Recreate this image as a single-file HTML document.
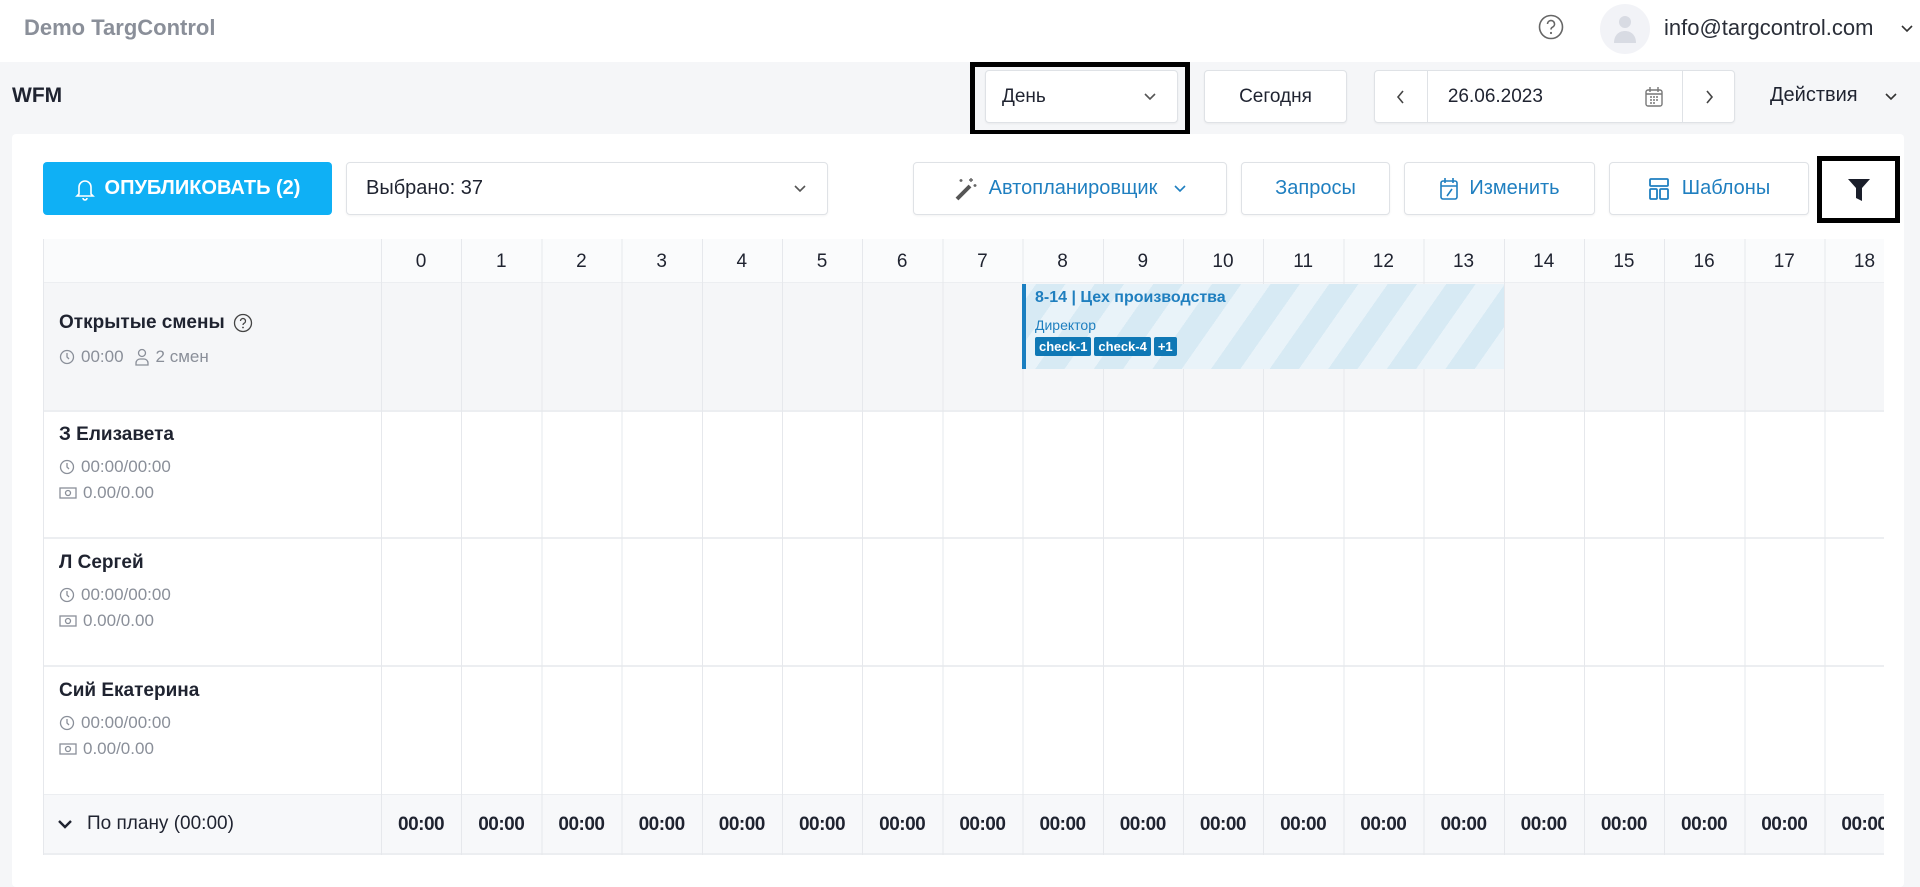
<!DOCTYPE html>
<html><head><meta charset="utf-8">
<style>
*{box-sizing:border-box;margin:0;padding:0}
body{width:1920px;height:887px;overflow:hidden;background:#f5f6f8;font-family:"Liberation Sans","Noto Sans CJK SC",sans-serif;color:#1f2330;position:relative}
.a{position:absolute}
.top{left:0;top:0;width:1920px;height:62px;background:#fff}
.btn{position:absolute;background:#fff;border:1px solid #dfe2e6;border-radius:4px;display:flex;align-items:center;justify-content:center;font-size:19px;box-shadow:0 1px 2px rgba(0,0,0,.05)}
.blue{color:#1f7fc0}
.card{left:12px;top:134px;width:1892px;height:753px;background:#fff;border-radius:4px}
.tbl{left:43px;top:239px;width:1841px;height:616px;overflow:hidden;background:#fff}
.row{position:absolute;left:0;width:1841px;border-bottom:2px solid #eceef1}
.vl{position:absolute;left:338px;top:0;width:1600px;height:616px;background:repeating-linear-gradient(to right,#e6e8ec 0 1px,transparent 1px 80.2px)}
.hrs{position:absolute;left:338px;display:flex}
.hrs span{width:80.2px;flex:none;text-align:center}
.name{position:absolute;left:16px;font-size:19px;font-weight:bold}
.meta{position:absolute;left:16px;font-size:17px;color:#8a8f99;display:flex;align-items:center;gap:6px}
.tag{display:inline-block;background:#0f78b5;color:#fff;font-size:13px;font-weight:bold;padding:2px 4px;border-radius:2px;margin-right:3px}
</style></head><body>
<div class="a top"></div>
<div class="a" style="left:24px;top:15px;font-size:22px;font-weight:bold;color:#8a8f99">Demo TargControl</div>
<svg class="a" style="left:1538px;top:14px" width="26" height="26" viewBox="0 0 26 26"><circle cx="13" cy="13" r="11.5" fill="none" stroke="#666" stroke-width="1.6"/><path d="M9.5 10a3.5 3.5 0 1 1 5 3.2c-1 .5-1.5 1.1-1.5 2.3" fill="none" stroke="#666" stroke-width="1.6"/><circle cx="13" cy="19" r="1.1" fill="#666"/></svg>
<div class="a" style="left:1600px;top:4px;width:50px;height:50px;border-radius:50%;background:#f2f3f7"></div>
<svg class="a" style="left:1611px;top:13px" width="28" height="32" viewBox="0 0 28 32"><circle cx="14" cy="9" r="6" fill="#d8dbe3"/><path d="M3 30c0-8 5-12 11-12s11 4 11 12z" fill="#d8dbe3"/></svg>
<div class="a" style="left:1664px;top:15px;font-size:22px;color:#2a2e38">info@targcontrol.com</div>
<svg class="a" style="left:1900px;top:24px" width="14" height="10" viewBox="0 0 14 10"><path d="M2 2l5 5 5-5" fill="none" stroke="#333" stroke-width="1.6"/></svg>

<div class="a" style="left:12px;top:84px;font-size:21px;font-weight:bold">WFM</div>
<div class="a" style="left:970px;top:62px;width:220px;height:73px;border:5px solid #000"></div>
<div class="btn" style="left:985px;top:70px;width:193px;height:53px;justify-content:space-between;padding:0 20px 0 16px"><span>День</span><svg width="14" height="10" viewBox="0 0 14 10"><path d="M2 2l5 5 5-5" fill="none" stroke="#555" stroke-width="1.6"/></svg></div>
<div class="btn" style="left:1204px;top:70px;width:143px;height:53px">Сегодня</div>
<div class="btn" style="left:1374px;top:70px;width:361px;height:53px;justify-content:flex-start">
<div style="width:53px;height:51px;border-right:1px solid #dfe2e6;display:flex;align-items:center;justify-content:center"><svg width="10" height="16" viewBox="0 0 10 16"><path d="M7 2L2 8l5 6" fill="none" stroke="#444" stroke-width="1.6"/></svg></div>
<div style="width:255px;padding-left:20px;display:flex;justify-content:space-between;align-items:center;padding-right:18px"><span>26.06.2023</span><svg width="20" height="22" viewBox="0 0 20 22"><rect x="2" y="4" width="16" height="16" rx="2" fill="none" stroke="#777" stroke-width="1.4"/><path d="M6 1v5M14 1v5M2 8h16" stroke="#777" stroke-width="1.4"/><path d="M6 11h2M9 11h2M12 11h2M6 14h2M9 14h2M12 14h2M6 17h2M9 17h2" stroke="#777" stroke-width="1.4"/></svg></div>
<div style="width:52px;height:51px;border-left:1px solid #dfe2e6;display:flex;align-items:center;justify-content:center"><svg width="10" height="16" viewBox="0 0 10 16"><path d="M3 2l5 6-5 6" fill="none" stroke="#444" stroke-width="1.6"/></svg></div>
</div>
<div class="a" style="left:1770px;top:84px;font-size:20px">Действия</div>
<svg class="a" style="left:1884px;top:92px" width="14" height="10" viewBox="0 0 14 10"><path d="M2 2l5 5 5-5" fill="none" stroke="#333" stroke-width="1.6"/></svg>

<div class="a card"></div>
<div class="a" style="left:43px;top:162px;width:289px;height:53px;background:#0fb0f5;border-radius:4px;color:#fff;font-size:20px;font-weight:bold;display:flex;align-items:center;justify-content:center;gap:10px"><svg width="20" height="24" viewBox="0 0 20 24"><path d="M4 17V10a6 6 0 0 1 12 0v7l2 2H2z M8 21a2 2 0 0 0 4 0" fill="none" stroke="#fff" stroke-width="1.6"/></svg>ОПУБЛИКОВАТЬ (2)</div>
<div class="btn" style="left:346px;top:162px;width:482px;height:53px;justify-content:space-between;padding:0 20px 0 19px;font-size:20px"><span>Выбрано: 37</span><svg width="14" height="10" viewBox="0 0 14 10"><path d="M2 2l5 5 5-5" fill="none" stroke="#555" stroke-width="1.6"/></svg></div>
<div class="btn blue" style="left:913px;top:162px;width:314px;height:53px;gap:10px;font-size:20px"><svg width="26" height="26" viewBox="0 0 26 26"><path d="M4 23L17 10" stroke="#555" stroke-width="4"/><path d="M18 2v4M16 4h4M22 8v3M20.5 9.5h3M8 3v3M6.5 4.5h3" stroke="#666" stroke-width="1.4"/></svg>Автопланировщик<svg width="14" height="10" viewBox="0 0 14 10" style="margin-left:6px"><path d="M2 2l5 5 5-5" fill="none" stroke="#1f7fc0" stroke-width="1.6"/></svg></div>
<div class="btn blue" style="left:1241px;top:162px;width:149px;height:53px;font-size:20px">Запросы</div>
<div class="btn blue" style="left:1404px;top:162px;width:191px;height:53px;gap:10px;font-size:20px"><svg width="20" height="24" viewBox="0 0 20 24"><rect x="2" y="4" width="16" height="18" rx="2" fill="none" stroke="#1f7fc0" stroke-width="1.6"/><path d="M6 1v5M14 1v5M2 9h16M8 19l5-7" stroke="#1f7fc0" stroke-width="1.6"/></svg>Изменить</div>
<div class="btn blue" style="left:1609px;top:162px;width:200px;height:53px;gap:12px;font-size:20px"><svg width="22" height="24" viewBox="0 0 22 24"><rect x="2" y="2" width="18" height="7" rx="1" fill="none" stroke="#1f7fc0" stroke-width="1.8"/><rect x="2" y="12" width="7" height="10" rx="1" fill="none" stroke="#1f7fc0" stroke-width="1.8"/><rect x="12" y="12" width="8" height="10" rx="1" fill="none" stroke="#1f7fc0" stroke-width="1.8"/></svg>Шаблоны</div>
<div class="a" style="left:1817px;top:156px;width:83px;height:67px;border:5px solid #000;background:#fff;display:flex;align-items:center;justify-content:center"><svg width="24" height="26" viewBox="0 0 24 26"><path d="M1 2h22l-8 9v13l-6-3V11z" fill="#1a1e2a"/></svg></div>

<div class="a tbl">
<div class="row" style="top:0;height:45px;background:#fafbfc"></div>
<div class="row" style="top:44px;height:129px;background:#f5f6f8"></div>
<div class="row" style="top:172px;height:128px"></div>
<div class="row" style="top:300px;height:128px"></div>
<div class="row" style="top:428px;height:129px"></div>
<div class="row" style="top:556px;height:60px;background:#f7f8fa"></div>
<div class="vl"></div>
<div style="position:absolute;left:0;top:0;width:1px;height:616px;background:#e6e8ec"></div>
<div class="hrs" style="top:12px;font-size:19px;font-weight:500"><span>0</span><span>1</span><span>2</span><span>3</span><span>4</span><span>5</span><span>6</span><span>7</span><span>8</span><span>9</span><span>10</span><span>11</span><span>12</span><span>13</span><span>14</span><span>15</span><span>16</span><span>17</span><span>18</span></div>

<div class="a" style="left:979px;top:45px;width:482px;height:85px;border-left:4px solid #1a7fc1;background:repeating-linear-gradient(-55deg,#e9f3f9 0 24px,#d7eaf4 24px 48px)"></div>
<div class="a" style="left:992px;top:50px;font-size:16px;font-weight:bold;color:#1f7fbf">8-14 | Цех производства</div>
<div class="a" style="left:992px;top:78px;font-size:14px;color:#1f7fbf">Директор</div>
<div class="a" style="left:992px;top:98px"><span class="tag">check-1</span><span class="tag">check-4</span><span class="tag">+1</span></div>

<div class="name" style="top:73px;display:flex;align-items:center;gap:8px">Открытые смены <svg width="20" height="20" viewBox="0 0 20 20"><circle cx="10" cy="10" r="8.5" fill="none" stroke="#444" stroke-width="1.3"/><path d="M7.5 8a2.5 2.5 0 1 1 3.5 2.3c-.7.4-1 .8-1 1.7" fill="none" stroke="#444" stroke-width="1.3"/><circle cx="10" cy="14.5" r=".9" fill="#444"/></svg></div>
<div class="meta" style="top:108px"><svg width="16" height="18" viewBox="0 0 16 18"><circle cx="8" cy="9" r="6.5" fill="none" stroke="#8a8f99" stroke-width="1.3"/><path d="M8 5v4l2 2" fill="none" stroke="#8a8f99" stroke-width="1.3"/></svg>00:00 <svg width="16" height="18" viewBox="0 0 16 18" style="margin-left:4px"><circle cx="8" cy="5" r="3.5" fill="none" stroke="#8a8f99" stroke-width="1.3"/><path d="M2 17v-2a4 4 0 0 1 4-4h4a4 4 0 0 1 4 4v2z" fill="none" stroke="#8a8f99" stroke-width="1.3"/></svg>2 смен</div>

<div class="name" style="top:185px">З Елизавета</div>
<div class="meta" style="top:218px"><svg width="16" height="18" viewBox="0 0 16 18"><circle cx="8" cy="9" r="6.5" fill="none" stroke="#8a8f99" stroke-width="1.3"/><path d="M8 5v4l2 2" fill="none" stroke="#8a8f99" stroke-width="1.3"/></svg>00:00/00:00</div>
<div class="meta" style="top:244px"><svg width="18" height="14" viewBox="0 0 18 14"><rect x="1" y="2" width="16" height="10" fill="none" stroke="#8a8f99" stroke-width="1.3"/><circle cx="9" cy="7" r="2.5" fill="none" stroke="#8a8f99" stroke-width="1.3"/></svg>0.00/0.00</div>

<div class="name" style="top:313px">Л Сергей</div>
<div class="meta" style="top:346px"><svg width="16" height="18" viewBox="0 0 16 18"><circle cx="8" cy="9" r="6.5" fill="none" stroke="#8a8f99" stroke-width="1.3"/><path d="M8 5v4l2 2" fill="none" stroke="#8a8f99" stroke-width="1.3"/></svg>00:00/00:00</div>
<div class="meta" style="top:372px"><svg width="18" height="14" viewBox="0 0 18 14"><rect x="1" y="2" width="16" height="10" fill="none" stroke="#8a8f99" stroke-width="1.3"/><circle cx="9" cy="7" r="2.5" fill="none" stroke="#8a8f99" stroke-width="1.3"/></svg>0.00/0.00</div>

<div class="name" style="top:441px">Сий Екатерина</div>
<div class="meta" style="top:474px"><svg width="16" height="18" viewBox="0 0 16 18"><circle cx="8" cy="9" r="6.5" fill="none" stroke="#8a8f99" stroke-width="1.3"/><path d="M8 5v4l2 2" fill="none" stroke="#8a8f99" stroke-width="1.3"/></svg>00:00/00:00</div>
<div class="meta" style="top:500px"><svg width="18" height="14" viewBox="0 0 18 14"><rect x="1" y="2" width="16" height="10" fill="none" stroke="#8a8f99" stroke-width="1.3"/><circle cx="9" cy="7" r="2.5" fill="none" stroke="#8a8f99" stroke-width="1.3"/></svg>0.00/0.00</div>

<div class="a" style="left:14px;top:574px;font-size:19px;display:flex;align-items:center;gap:14px"><svg width="16" height="12" viewBox="0 0 16 12"><path d="M2 3l6 6 6-6" fill="none" stroke="#1f2330" stroke-width="2.4"/></svg>По плану (00:00)</div>
<div class="hrs" style="top:575px;font-size:19px;font-weight:bold;letter-spacing:-0.5px"><span>00:00</span><span>00:00</span><span>00:00</span><span>00:00</span><span>00:00</span><span>00:00</span><span>00:00</span><span>00:00</span><span>00:00</span><span>00:00</span><span>00:00</span><span>00:00</span><span>00:00</span><span>00:00</span><span>00:00</span><span>00:00</span><span>00:00</span><span>00:00</span><span>00:00</span></div>
</div>
</body></html>
